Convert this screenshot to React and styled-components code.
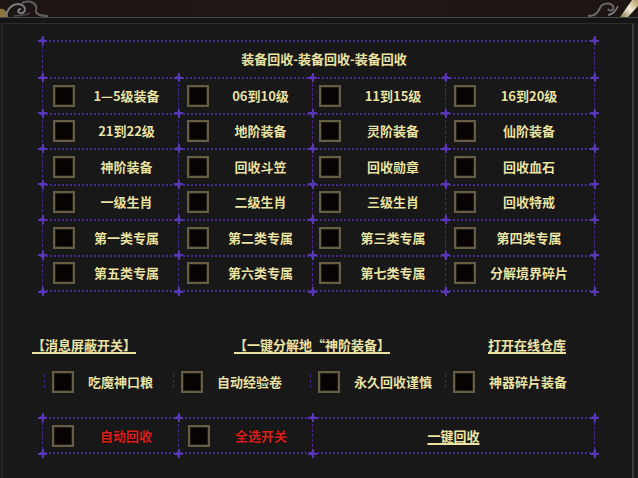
import React from "react";
import styled, { createGlobalStyle } from "styled-components";

const GlobalStyle = createGlobalStyle`
  html, body {
    margin: 0;
    padding: 0;
    background: #1c1c1c;
  }
  body {
    width: 638px;
    height: 478px;
    overflow: hidden;
    font-family: "Noto Sans CJK SC", "Noto Sans", sans-serif;
  }
`;

const PURPLE = "#47298f";
const MARK = "#5936b8";
const CREAM = "#ebe3a2";

const gridRows = [
  ["1—5级装备", "06到10级", "11到15级", "16到20级"],
  ["21到22级", "地阶装备", "灵阶装备", "仙阶装备"],
  ["神阶装备", "回收斗笠", "回收勋章", "回收血石"],
  ["一级生肖", "二级生肖", "三级生肖", "回收特戒"],
  ["第一类专属", "第二类专属", "第三类专属", "第四类专属"],
  ["第五类专属", "第六类专属", "第七类专属", "分解境界碎片"],
];

const options = ["吃魔神口粮", "自动经验卷", "永久回收谨慎", "神器碎片装备"];

const Screen = styled.div`
  width: 638px;
  height: 478px;
  display: flex;
  flex-direction: column;
  background: #1c1c1c;
`;

const TopBar = styled.div`
  height: 17px;
  flex: none;
  display: flex;
  justify-content: space-between;
  background: linear-gradient(90deg, #1d1414, #211616 50%, #1d1414);
  border-bottom: 1px solid #4b4747;
`;

const TopGap = styled.div`
  height: 5px;
  flex: none;
  background: #151515;
`;

const Frame = styled.div`
  flex: 1;
  width: 632px;
  margin-left: 2px;
  box-sizing: border-box;
  padding: 16px 0 0 39px;
  background: #181818;
  border-top: 1px solid #2e2e2e;
  border-left: 1px solid #2c2c2c;
  border-right: 2px solid #3a3a3a;
`;

const Board = styled.div`
  position: relative;
  width: 553px;
  box-sizing: border-box;
  display: grid;
  grid-template-columns: 136px 134px 133px 149px;
  grid-template-rows: 37px repeat(6, 35.5px);
  border-top: 2px dotted ${PURPLE};
  border-left: 1px dashed ${PURPLE};
`;

const Cell = styled.div`
  position: relative;
  display: flex;
  align-items: center;
  padding-left: ${(p) => p.$pad ?? 9}px;
  border-right: 1px dashed ${PURPLE};
  border-bottom: 2px dotted ${PURPLE};
  grid-column: ${(p) => (p.$wide ? "1 / -1" : "auto")};
  justify-content: ${(p) => (p.$wide ? "center" : "flex-start")};
`;

const Mark = styled.span`
  position: absolute;
  width: 9px;
  height: 9px;
  ${(p) => (p.$right ? "right: -5px;" : "left: -5px;")}
  ${(p) => (p.$bottom ? "bottom: -6px;" : "top: -6px;")}
  background:
    radial-gradient(circle, ${MARK} 2px, transparent 2.5px) center / 100% 100% no-repeat,
    linear-gradient(${MARK}, ${MARK}) center / 2px 100% no-repeat,
    linear-gradient(${MARK}, ${MARK}) center / 100% 2px no-repeat;
`;

const Box = styled.span`
  width: 22px;
  height: 22px;
  flex: none;
  box-sizing: border-box;
  background: #070303;
  border: 2px solid #655e44;
  box-shadow: inset 0 0 0 1px #231f14;
`;

const Label = styled.span`
  flex: 1;
  text-align: ${(p) => (p.$left ? "left" : "center")};
  padding-right: ${(p) => p.$trim ?? 0}px;
  color: ${(p) => p.$color || CREAM};
  font-size: 13px;
  font-weight: 700;
  line-height: 18px;
  white-space: nowrap;
  text-shadow: 0 0 1px #000;
`;

const Title = styled.span`
  color: ${CREAM};
  font-size: 13px;
  font-weight: 700;
  margin-left: 2px;
  margin-top: -2px;
`;

const LinkRow = styled.div`
  width: 534px;
  margin: 44px 0 0 -10px;
  display: flex;
  justify-content: space-between;
`;

const TextLink = styled.a`
  color: ${CREAM};
  font-size: 13px;
  font-weight: 700;
  line-height: 18px;
  text-decoration: underline;
  text-decoration-thickness: 1.5px;
  text-underline-offset: 2px;
  white-space: nowrap;
  cursor: pointer;
`;

const OptionRow = styled.div`
  margin: 17px 0 0 2px;
  display: grid;
  grid-template-columns: 129px 137px 135px 150px;
  height: 22px;
`;

const Option = styled.div`
  position: relative;
  display: flex;
  align-items: center;
  gap: 14px;
  padding-left: 8px;
  &::before {
    content: "";
    position: absolute;
    left: 0;
    top: 3px;
    height: 14px;
    border-left: 1px dashed ${PURPLE};
  }
`;

const Footer = styled.div`
  position: relative;
  width: 553px;
  height: 37px;
  margin-top: 24px;
  box-sizing: border-box;
  display: grid;
  grid-template-columns: 136px 134px 1fr;
  border-top: 2px dotted ${PURPLE};
  border-bottom: 2px dotted ${PURPLE};
  border-left: 1px dashed ${PURPLE};
  border-right: 1px dashed ${PURPLE};
`;

const FootCell = styled.div`
  position: relative;
  display: flex;
  align-items: center;
  justify-content: ${(p) => (p.$center ? "center" : "flex-start")};
  padding-left: ${(p) => (p.$center ? 0 : 9)}px;
  border-right: ${(p) => (p.$end ? "none" : `1px dashed ${PURPLE}`)};
`;

const LeftOrnament = () => (
  <svg width="48" height="17" viewBox="0 0 48 17">
    <path d="M0 9 C4 8 7 11 8 17 L0 17 Z" fill="#8a7440" />
    <path
      d="M6 16 C8 6 16 2 22 5 C27 8 25 14 20 13 C17 12 18 9 21 9"
      stroke="#7d7d7d"
      strokeWidth="2"
      fill="none"
    />
    <path
      d="M22 3 C30 -1 38 4 36 10 C35 14 40 16 48 16"
      stroke="#5e5e5e"
      strokeWidth="2"
      fill="none"
    />
    <path d="M14 16 C20 15 26 16 30 13" stroke="#4a4a4a" strokeWidth="1.5" fill="none" />
  </svg>
);

const RightOrnament = () => (
  <svg width="50" height="17" viewBox="0 0 50 17">
    <defs>
      <linearGradient id="shine" x1="0" y1="1" x2="1" y2="0">
        <stop offset="0" stopColor="#8a7848" />
        <stop offset="0.5" stopColor="#f4eed8" />
        <stop offset="1" stopColor="#b09a60" />
      </linearGradient>
    </defs>
    <path
      d="M0 16 C8 16 10 12 12 8 C14 3 22 2 25 6 C27 10 22 12 20 9"
      stroke="#6a6a6a"
      strokeWidth="2"
      fill="none"
    />
    <path d="M20 15 C26 14 28 10 30 6" stroke="#858585" strokeWidth="1.5" fill="none" />
    <path d="M32 17 L44 0 L50 0 L50 6 L40 17 Z" fill="url(#shine)" />
  </svg>
);

const App = () => {
  return (
    <Screen>
      <GlobalStyle />
      <TopBar>
        <LeftOrnament />
        <RightOrnament />
      </TopBar>
      <TopGap />
      <Frame>
        <Board>
          <Cell $wide>
            <Mark />
            <Mark $right />
            <Title>装备回收-装备回收-装备回收</Title>
          </Cell>
          {gridRows.map((row, r) =>
            row.map((text, c) => (
              <Cell key={`${r}-${c}`} $pad={c === 2 ? 6 : c === 0 ? 10 : 8}>
                <Mark />
                {c === 3 && <Mark $right />}
                {r === gridRows.length - 1 && <Mark $bottom />}
                {r === gridRows.length - 1 && c === 3 && <Mark $right $bottom />}
                <Box />
                <Label $trim={c === 3 ? 12 : 0}>{text}</Label>
              </Cell>
            ))
          )}
        </Board>

        <LinkRow>
          <TextLink>【消息屏蔽开关】</TextLink>
          <TextLink>【一键分解地“神阶装备】</TextLink>
          <TextLink>打开在线仓库</TextLink>
        </LinkRow>

        <OptionRow>
          {options.map((text) => (
            <Option key={text}>
              <Box />
              <Label $left>{text}</Label>
            </Option>
          ))}
        </OptionRow>

        <Footer>
          <FootCell>
            <Mark />
            <Mark $bottom />
            <Box />
            <Label $color="#d8201c">自动回收</Label>
          </FootCell>
          <FootCell>
            <Mark />
            <Mark $bottom />
            <Box />
            <Label $color="#d8201c">全选开关</Label>
          </FootCell>
          <FootCell $center $end>
            <Mark />
            <Mark $bottom />
            <Mark $right />
            <Mark $right $bottom />
            <TextLink>一键回收</TextLink>
          </FootCell>
        </Footer>
      </Frame>
    </Screen>
  );
};

export default App;
